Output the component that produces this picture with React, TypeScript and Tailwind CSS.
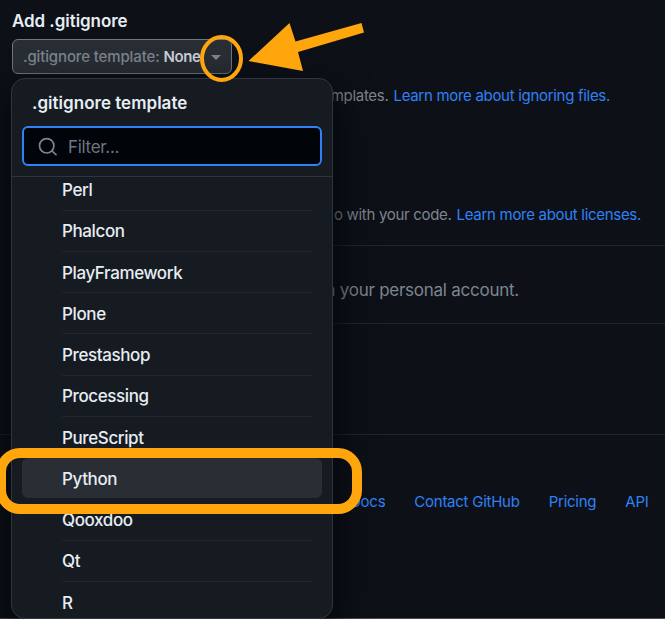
const templates = [
  'Perl',
  'Phalcon',
  'PlayFramework',
  'Plone',
  'Prestashop',
  'Processing',
  'PureScript',
  'Python',
  'Qooxdoo',
  'Qt',
  'R',
];

function TemplateRow({ name }: { name: string }) {
  const active = name === 'Python';
  const divided = !active && name !== 'Perl' && name !== 'Qooxdoo';
  return (
    <li className="relative flex h-[41.25px] shrink-0 items-center px-[50px] pt-[4px] text-[17px] font-[450] tracking-[-0.39px] text-[#e6edf3]">
      {active && <div className="absolute inset-x-[10px] top-px h-10 rounded-md bg-[#282e34]" />}
      {divided && <div className="absolute top-0 right-5 left-[50px] h-px bg-[#21262d]" />}
      <span className="relative">{name}</span>
    </li>
  );
}

function TemplateMenu() {
  return (
    <div className="absolute top-[78px] left-[11px] flex h-[541px] w-[322px] flex-col overflow-hidden rounded-[14px] border border-[#30363d] bg-[#161b22]">
      <div className="flex h-[47px] shrink-0 items-center pt-[2px] pl-5 text-[17px] font-semibold tracking-[0.02px] text-[#e6edf3]">
        .gitignore template
      </div>
      <div className="mx-[10px] flex h-10 shrink-0 items-center rounded-md border-2 border-[#2f81f7] bg-[#010409] pt-[2px] pl-[14px]">
        <svg width="20" height="20" viewBox="0 0 20 20" fill="none" stroke="#7d8590" strokeWidth="1.7" strokeLinecap="round">
          <circle cx="8.7" cy="8.8" r="7.2" />
          <path d="M14 14 L18 17.7" />
        </svg>
        <span className="ml-[10px] pt-[2px] text-[17px] tracking-[-0.3px] text-[#6e7681]">Filter...</span>
      </div>
      <div className="mt-[10px] h-px shrink-0 bg-[#30363d]" />
      <ul className="-mt-[8.7px] flex flex-col">
        {templates.map((name) => (
          <TemplateRow key={name} name={name} />
        ))}
      </ul>
    </div>
  );
}

function Annotations() {
  return (
    <svg className="absolute top-0 left-0" width="665" height="619" viewBox="0 0 665 619" fill="none">
      <rect x="202" y="37" width="39" height="43" rx="19.5" ry="21.5" stroke="#ffa60d" strokeWidth="4" />
      <path d="M248.5 61 L289.5 23 L295.5 41.5 L361.5 23 L364 32.5 L298 52 L303 71 Z" fill="#ffa60d" />
      <rect x="1" y="453" width="356" height="56" rx="19" stroke="#ffa60d" strokeWidth="10" />
    </svg>
  );
}

export default function App() {
  return (
    <main className="relative h-[619px] w-[665px] overflow-hidden bg-[#0d1117] font-['Inter','Liberation_Sans',sans-serif] text-[15px] whitespace-nowrap">
      <div className="flex h-full flex-col">
        <div className="flex h-[39px] shrink-0 items-center pt-[5px] pl-3 text-[17px] font-semibold tracking-[-0.06px] text-[#e6edf3]">
          Add .gitignore
        </div>
        <button className="ml-3 flex h-[35px] w-[220px] shrink-0 items-center rounded-md border border-[#6e7681] bg-[#292e34] pt-[2px] pl-[10px] text-[15px] font-medium text-[#7d8590]">
          <span className="tracking-[-0.13px]">.gitignore template:</span>
          <span className="ml-1 font-semibold tracking-[-0.45px] text-[#c9d1d9]">None</span>
          <span className="ml-[11px] border-x-[5px] border-t-[5px] border-x-transparent border-t-[#7d8590]" />
        </button>
        <div className="flex h-11 shrink-0 items-center justify-end pr-[55px] tracking-[-0.3px] text-[#7d8590]">
          <span>mplates.</span>
          <a className="ml-[5px] text-[#2f81f7]">Learn more about ignoring files.</a>
        </div>
        <div className="mt-[77px] flex h-10 shrink-0 items-center justify-end pr-[24px] tracking-[-0.3px] text-[#7d8590]">
          <span>o with your code.</span>
          <a className="ml-[5px] text-[#2f81f7]">Learn more about licenses.</a>
        </div>
        <div className="mt-[10px] ml-3 flex h-[79px] shrink-0 items-center justify-end border-y border-[#21262d] pt-3 pr-[146px] text-[17px] tracking-[-0.25px] text-[#7d8590]">
          n your personal account.
        </div>
        <div className="mt-[110px] h-px shrink-0 bg-[#21262d]" />
        <nav className="mt-[52px] flex h-[30px] shrink-0 items-center justify-end gap-[29px] pr-[16.5px] tracking-[-0.25px] text-[#2f81f7]">
          <a>Docs</a>
          <a>Contact GitHub</a>
          <a>Pricing</a>
          <a>API</a>
        </nav>
        <div className="mt-auto h-px shrink-0 bg-[#484b50]" />
      </div>
      <div className="absolute top-[78px] left-[11px] h-[540px] w-[322px] rounded-[14px] shadow-[0_16px_40px_#010409]" />
      <TemplateMenu />
      <Annotations />
    </main>
  );
}
